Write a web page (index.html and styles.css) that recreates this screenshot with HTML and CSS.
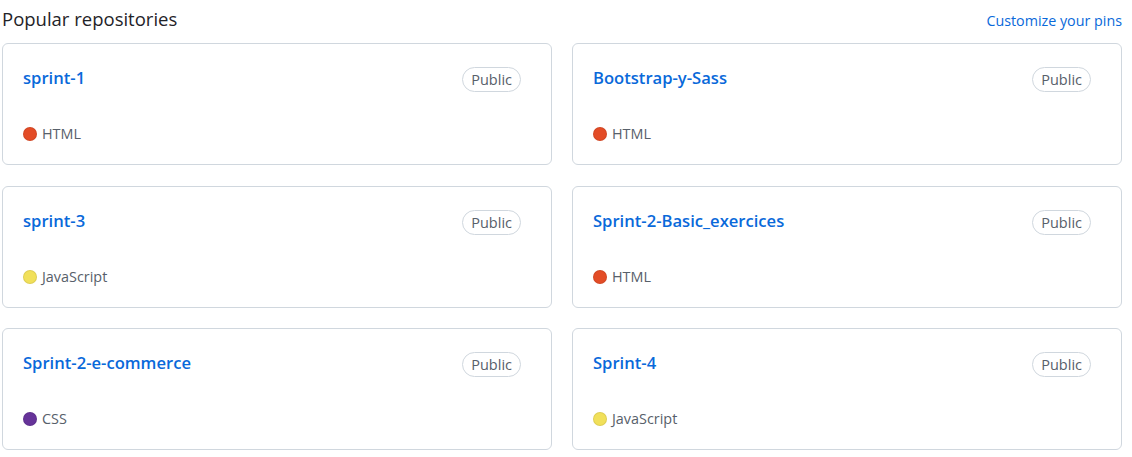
FILE: index.html
```html
<!DOCTYPE html>
<html>
<head>
<meta charset="utf-8">
<link rel="stylesheet" href="styles.css">
</head>
<body>
<div class="pinned">
  <div class="pinned-head">
    <h2 class="pinned-title">Popular repositories</h2>
    <a class="customize" href="#">Customize your pins</a>
  </div>
  <ol class="pinned-grid">
    <li class="repo-card">
      <div class="repo-top"><a class="repo-name" href="#">sprint-1</a><span class="badge">Public</span></div>
      <div class="repo-lang"><span class="dot dot-html"></span><span>HTML</span></div>
    </li>
    <li class="repo-card">
      <div class="repo-top"><a class="repo-name" href="#">Bootstrap-y-Sass</a><span class="badge">Public</span></div>
      <div class="repo-lang"><span class="dot dot-html"></span><span>HTML</span></div>
    </li>
    <li class="repo-card">
      <div class="repo-top"><a class="repo-name" href="#">sprint-3</a><span class="badge">Public</span></div>
      <div class="repo-lang"><span class="dot dot-js"></span><span>JavaScript</span></div>
    </li>
    <li class="repo-card">
      <div class="repo-top"><a class="repo-name" href="#">Sprint-2-Basic_exercices</a><span class="badge">Public</span></div>
      <div class="repo-lang"><span class="dot dot-html"></span><span>HTML</span></div>
    </li>
    <li class="repo-card">
      <div class="repo-top"><a class="repo-name" href="#">Sprint-2-e-commerce</a><span class="badge">Public</span></div>
      <div class="repo-lang"><span class="dot dot-css"></span><span>CSS</span></div>
    </li>
    <li class="repo-card">
      <div class="repo-top"><a class="repo-name" href="#">Sprint-4</a><span class="badge">Public</span></div>
      <div class="repo-lang"><span class="dot dot-js"></span><span>JavaScript</span></div>
    </li>
  </ol>
</div>
</body>
</html>
```
FILE: styles.css
```css
html, body {
  margin: 0;
  padding: 0;
  background: #ffffff;
}
body {
  font-family: "Open Sans", "Noto Sans", sans-serif;
  color: #1f2328;
}
.pinned {
  padding: 0 10px 0 2px;
}
.pinned-head {
  display: flex;
  justify-content: space-between;
  align-items: baseline;
  height: 43px;
  padding-top: 6px;
  box-sizing: border-box;
}
.pinned-title {
  margin: 0;
  font-size: 18.5px;
  font-weight: 400;
  line-height: 26px;
  color: #1f2328;
}
.customize {
  font-size: 14.3px;
  color: #0969da;
  text-decoration: none;
}
.pinned-grid {
  list-style: none;
  margin: 0;
  padding: 0;
  display: grid;
  grid-template-columns: 550px 550px;
  column-gap: 20px;
  row-gap: 20.5px;
}
.repo-card {
  height: 122px;
  box-sizing: border-box;
  border: 1px solid #d0d7de;
  border-radius: 6px;
  padding: 23px 30px 20px 20px;
  display: flex;
  flex-direction: column;
  justify-content: space-between;
}
.repo-top {
  display: flex;
  justify-content: space-between;
  align-items: flex-start;
}
.repo-name {
  font-size: 16.6px;
  font-weight: 600;
  color: #0969da;
  text-decoration: none;
  line-height: 20px;
  margin-top: 1px;
}
.badge {
  font-size: 14.5px;
  font-weight: 500;
  color: #57606a;
  border: 1px solid #d0d7de;
  border-radius: 2em;
  height: 25px;
  box-sizing: border-box;
  padding: 0 8px;
  display: inline-flex;
  align-items: center;
}
.repo-lang {
  display: flex;
  align-items: center;
  font-size: 14.4px;
  color: #57606a;
  line-height: 20px;
}
.dot {
  width: 14px;
  height: 14px;
  border-radius: 50%;
  margin-right: 5px;
  box-sizing: border-box;
  border: 1px solid rgba(0,0,0,0.08);
}
.dot-html { background: #e34c26; }
.dot-js { background: #f1e05a; }
.dot-css { background: #663399; }
```
